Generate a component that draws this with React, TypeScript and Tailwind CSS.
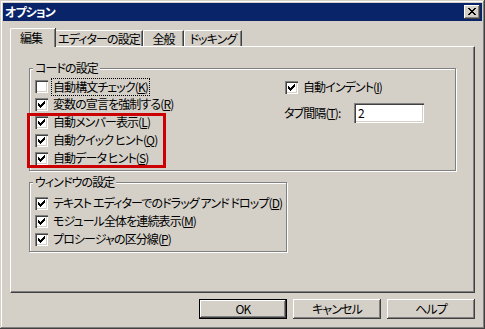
import type { ReactNode } from "react";

const CHECK = ["......#", ".....##", "#...###", "##.###.", "#####..", ".###...", "..#...."];
const CROSS = ["##....##", ".##..##.", "..####..", "...##...", "..####..", ".##..##.", "##....##"];

function Pixels({ rows }: { rows: string[] }) {
  return (
    <svg width={rows[0].length} height={rows.length} shapeRendering="crispEdges" className="block">
      {rows.flatMap((row, y) =>
        row.split("").map((c, x) => (c === "#" ? <rect key={`${x}-${y}`} x={x} y={y} width={1} height={1} fill="#000" /> : null))
      )}
    </svg>
  );
}

function CheckBox({ checked }: { checked: boolean }) {
  return (
    <span className="flex h-[13px] w-[13px] shrink-0 items-center justify-center bg-white shadow-[inset_1px_1px_#808080,inset_2px_2px_#404040,inset_-1px_-1px_#fff,inset_-2px_-2px_#d4d0c8]">
      {checked && <Pixels rows={CHECK} />}
    </span>
  );
}

type RowProps = {
  label: string;
  hotkey: string;
  checked?: boolean;
  focused?: boolean;
  className?: string;
};

function CheckRow({ label, hotkey, checked = true, focused = false, className = "h-[18px]" }: RowProps) {
  return (
    <label className={`flex items-center gap-[5px] whitespace-nowrap ${className}`}>
      <CheckBox checked={checked} />
      <span className={focused ? "outline-1 outline-offset-[1px] outline-dotted outline-black" : ""}>
        {label}(<u>{hotkey}</u>)
      </span>
    </label>
  );
}

function Group({ title, className, children }: { title: string; className: string; children: ReactNode }) {
  return (
    <fieldset className={`border border-[#808080] pl-[3px] shadow-[1px_1px_0_#fff,inset_1px_1px_0_#fff] ${className}`}>
      <legend className="bg-[#d4d0c8] px-[2px]">{title}</legend>
      {children}
    </fieldset>
  );
}

const TABS = [
  { label: "編集", w: "w-[45px]", active: true },
  { label: "エディターの設定", w: "w-[88px]" },
  { label: "全般", w: "w-[41px]" },
  { label: "ドッキング", w: "w-[58px]" },
];

function Button({ children, primary = false }: { children: ReactNode; primary?: boolean }) {
  return (
    <button
      className={`flex h-[20px] w-[88px] items-center justify-center bg-[#d4d0c8] ${
        primary
          ? "border border-black shadow-[inset_-1px_-1px_#404040,inset_1px_1px_#fff,inset_-2px_-2px_#808080]"
          : "shadow-[inset_-1px_-1px_#404040,inset_1px_1px_#fff,inset_-2px_-2px_#808080,inset_2px_2px_#d4d0c8]"
      }`}
    >
      {children}
    </button>
  );
}

export default function App() {
  return (
    <div className="h-[329px] w-[485px] bg-[#d4d0c8] p-[3px] font-['Noto_Sans_CJK_JP','Noto_Sans',sans-serif] text-[12px] leading-[14px] tracking-[-0.9px] text-black [font-feature-settings:'palt'] shadow-[inset_-1px_-1px_#404040,inset_1px_1px_#d4d0c8,inset_-2px_-2px_#808080,inset_2px_2px_#fff]">
      <div className="flex h-[18px] items-center justify-between bg-[#0a246a] pl-[2px] pr-[2px]">
        <span className="font-bold text-white">オプション</span>
        <button className="flex h-[14px] w-[16px] items-start justify-start bg-[#d4d0c8] pl-[4px] pt-[3px] shadow-[inset_-1px_-1px_#404040,inset_1px_1px_#fff,inset_-2px_-2px_#808080]">
          <Pixels rows={CROSS} />
        </button>
      </div>

      <div className="mt-[7px] px-[7px]">
        <div className="flex h-[18px] items-end whitespace-nowrap">
          {TABS.map((t) =>
            t.active ? (
              <div
                key={t.label}
                className={`relative z-10 -mb-px flex h-[19px] items-start justify-center rounded-tl-[2px] border-l border-t border-white bg-[#d4d0c8] pr-[4px] pt-[2px] shadow-[inset_-1px_0_#808080,1px_0_#404040] ${t.w}`}
              >
                {t.label}
              </div>
            ) : (
              <div
                key={t.label}
                className={`flex h-[16px] items-center justify-center rounded-tl-[2px] border-l border-r border-t border-white border-r-[#404040] pt-[1px] shadow-[inset_-1px_0_#808080] ${t.w}`}
              >
                {t.label}
              </div>
            )
          )}
        </div>

        <div className="h-[247px] border border-b-[#404040] border-l-white border-r-[#404040] border-t-white pl-[18px] pt-[14px] shadow-[inset_-1px_-1px_#808080]">
          <Group title="コードの設定" className="h-[110px] w-[427px]">
            <div className="flex pl-[2px] pt-[3px]">
              <div className="flex w-[249px] flex-col">
                <CheckRow label="自動構文チェック" hotkey="K" checked={false} focused className="h-[17px]" />
                <CheckRow label="変数の宣言を強制する" hotkey="R" />
                <div className="relative">
                  <CheckRow label="自動メンバー表示" hotkey="L" />
                  <CheckRow label="自動クイック ヒント" hotkey="Q" />
                  <CheckRow label="自動データ ヒント" hotkey="S" />
                  <span className="pointer-events-none absolute -left-[8px] top-0 h-[55px] w-[139px] border-[3px] border-[#cc0000]" />
                </div>
              </div>
              <div className="flex flex-col">
                <CheckRow label="自動インデント" hotkey="I" className="ml-[1px] h-[18px]" />
                <div className="mt-[7px] flex h-[20px] items-center">
                  <span className="w-[70px]">
                    タブ間隔(<u>T</u>):
                  </span>
                  <div className="flex h-[20px] w-[70px] items-center bg-white pl-[4px] shadow-[inset_1px_1px_#808080,inset_2px_2px_#404040,inset_-1px_-1px_#fff,inset_-2px_-2px_#d4d0c8]">
                    2
                  </div>
                </div>
              </div>
            </div>
          </Group>

          <Group title="ウィンドウの設定" className="mt-[4px] h-[77px] w-[258px]">
            <div className="flex flex-col pl-[2px] pt-[5px]">
              <CheckRow label="テキスト エディターでのドラッグ アンド ドロップ" hotkey="D" />
              <CheckRow label="モジュール全体を連続表示" hotkey="M" />
              <CheckRow label="プロシージャの区分線" hotkey="P" />
            </div>
          </Group>
        </div>

        <div className="mt-[6px] flex justify-end gap-[6px]">
          <Button primary>OK</Button>
          <Button>キャンセル</Button>
          <Button>ヘルプ</Button>
        </div>
      </div>
    </div>
  );
}
